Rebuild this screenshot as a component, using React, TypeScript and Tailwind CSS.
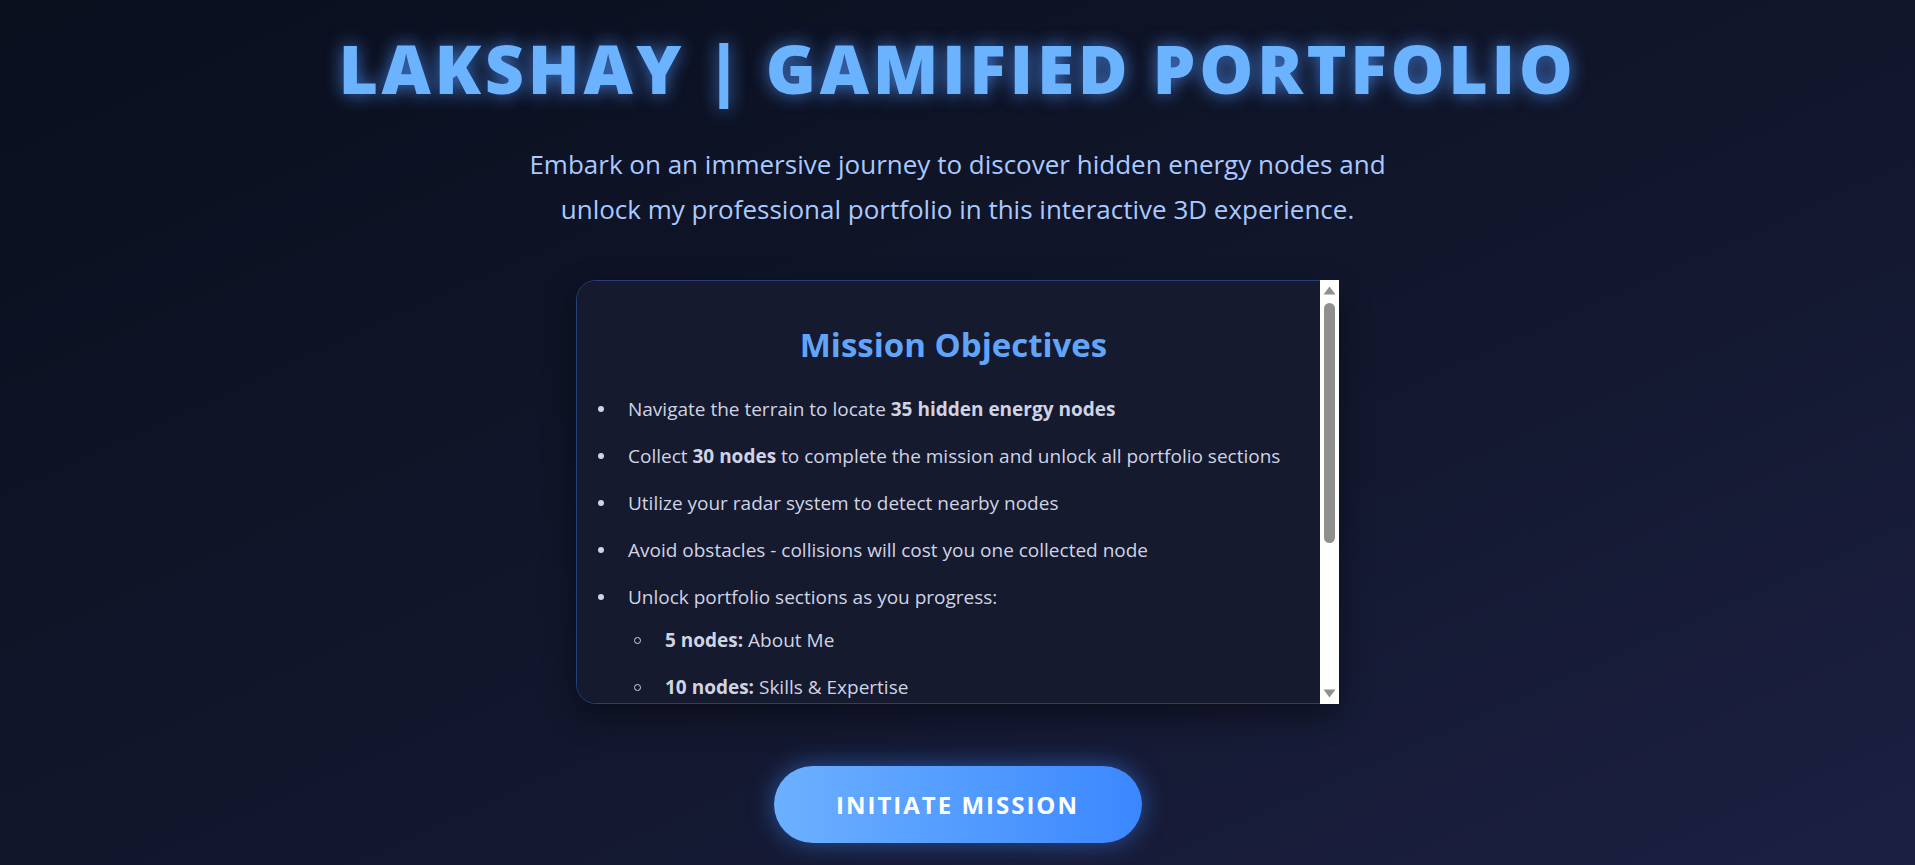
const objectives = [
  { text: "Navigate the terrain to locate ", bold: "35 hidden energy nodes", after: "" },
  { text: "Collect ", bold: "30 nodes", after: " to complete the mission and unlock all portfolio sections" },
  { text: "Utilize your radar system to detect nearby nodes", bold: "", after: "" },
  { text: "Avoid obstacles - collisions will cost you one collected node", bold: "", after: "" },
  { text: "Unlock portfolio sections as you progress:", bold: "", after: "" },
];

const unlocks = [
  { nodes: "5 nodes:", label: "About Me" },
  { nodes: "10 nodes:", label: "Skills & Expertise" },
  { nodes: "15 nodes:", label: "Projects" },
  { nodes: "20 nodes:", label: "Experience" },
  { nodes: "25 nodes:", label: "Education" },
  { nodes: "30 nodes:", label: "Contact" },
];

function ScrollTrack() {
  // classic scrollbar look: white track, gray thumb and arrows
  return (
    <div className="absolute right-0 top-0 bottom-0 w-[19px] bg-white flex flex-col items-center">
      <svg width="13" height="9" viewBox="0 0 13 9" className="mt-[6px]">
        <path d="M6.5 0.5 L12.5 8.5 L0.5 8.5 Z" fill="#8f8f8f" />
      </svg>
      <div className="mt-[8px] h-[240px] w-[11px] rounded-full bg-[#8f8f8f]" />
      <div className="flex-1" />
      <svg width="13" height="9" viewBox="0 0 13 9" className="mb-[6px]">
        <path d="M0.5 0.5 L12.5 0.5 L6.5 8.5 Z" fill="#8f8f8f" />
      </svg>
    </div>
  );
}

export default function App() {
  return (
    <div className="min-h-[865px] w-full bg-gradient-to-br from-[#0a0f1e] via-[#11162b] to-[#1c2042] font-['Open_Sans',sans-serif] flex flex-col items-center pt-[30px]">
      <h1 className="text-[68px] font-extrabold leading-none tracking-[3.6px] text-[#6cb3ff] [text-shadow:0_0_18px_rgba(80,150,255,0.75)] py-[4px]">
        LAKSHAY | GAMIFIED PORTFOLIO
      </h1>

      <p className="mt-[36px] text-center text-[26px] leading-[45px] text-[#aac9ff]">
        Embark on an immersive journey to discover hidden energy nodes and
        <br />
        unlock my professional portfolio in this interactive 3D experience.
      </p>

      <div className="relative mt-[48px] w-[763px] h-[424px]">
        <div className="h-full rounded-[20px] border border-[#25407a] bg-[#151a2e] shadow-[0_12px_32px_rgba(0,0,0,0.45)] overflow-y-auto [scrollbar-width:none]">
          <div className="pt-[44px] pb-[30px] pl-[22px] pr-[30px]">
            <h2 className="text-center text-[33px] font-bold leading-[40px] text-[#60a5fa]">
              Mission Objectives
            </h2>
            <ul className="mt-[30px] flex flex-col gap-[19px] text-[19px] leading-[28px] text-[#d0d3e4]">
              {objectives.map((o) => (
                <li key={o.text} className="flex items-center">
                  <span className="w-[6px] h-[6px] rounded-full bg-[#d0d3e4] ml-[-1px] mr-[24px] shrink-0" />
                  <span>
                    {o.text}
                    {o.bold && <strong className="font-bold">{o.bold}</strong>}
                    {o.after}
                  </span>
                </li>
              ))}
              {unlocks.map((u, i) => (
                <li
                  key={u.nodes}
                  className={i === 0 ? "flex items-center pl-[35px] mt-[-4px]" : "flex items-center pl-[35px]"}
                >
                  <span className="w-[7px] h-[7px] rounded-full border border-[#d0d3e4] mr-[24px] shrink-0" />
                  <span>
                    <strong className="font-bold">{u.nodes}</strong> {u.label}
                  </span>
                </li>
              ))}
            </ul>
          </div>
        </div>
        <ScrollTrack />
      </div>

      <button className="mt-[62px] h-[77px] w-[368px] rounded-full bg-gradient-to-r from-[#6cb0ff] to-[#3b87ff] text-white text-[24px] font-bold tracking-[2px] shadow-[0_0_24px_rgba(59,130,246,0.55)]">
        INITIATE MISSION
      </button>
    </div>
  );
}
